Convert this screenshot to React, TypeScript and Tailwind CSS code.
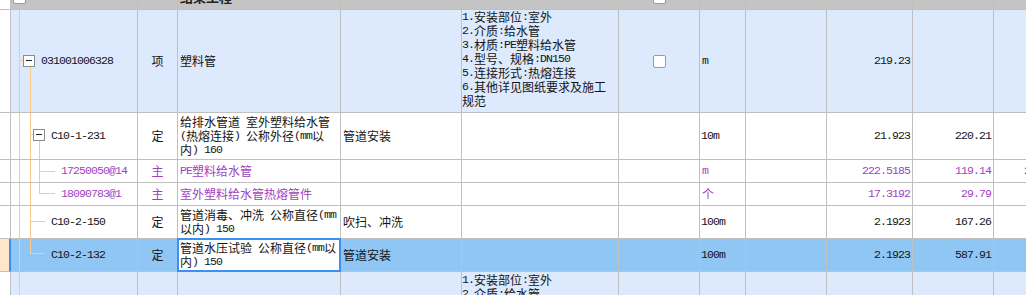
import React from "react";

const MONO = "font-['Liberation_Mono',monospace] text-[11.5px] tracking-[-0.9px]";
const GRID =
  "grid grid-cols-[11px_127px_40px_163px_121px_157px_81px_46px_81px_86px_81px_120px]";
const B = "border-r border-b border-[#c0c0c0] min-w-0";
const C = `${B} overflow-hidden flex items-center`;
const LINE = "absolute bg-[#fcc98b]";
const PURPLE = "text-[#a23fc0]";

function T({ s }: { s: string }) {
  const parts = s.split(/([\x20-\x7e]+)/).filter((p) => p !== "");
  return (
    <>
      {parts.map((p, i) =>
        /^[\x20-\x7e]+$/.test(p) ? (
          <span key={i} className={MONO}>
            {p}
          </span>
        ) : (
          <span key={i}>{p}</span>
        )
      )}
    </>
  );
}

function Lines({ lines }: { lines: string[] }) {
  return (
    <div className="whitespace-pre">
      {lines.map((l, i) => (
        <div key={i} className="h-[14px] leading-[14px] flex items-center">
          <T s={l} />
        </div>
      ))}
    </div>
  );
}

function MinusBox({ pos }: { pos: string }) {
  return (
    <div className={`absolute w-[12px] h-[12px] bg-white border border-[#8c8c8c] ${pos}`}>
      <div className="absolute left-[2px] top-[4px] w-[6px] h-px bg-[#222]" />
    </div>
  );
}

function CheckBox({ extra = "" }: { extra?: string }) {
  return (
    <div className={`w-[13px] h-[13px] shrink-0 bg-white border border-[#9a9a9a] rounded-[2px] ${extra}`} />
  );
}

const features = [
  "1.安装部位:室外",
  "2.介质:给水管",
  "3.材质:PE塑料给水管",
  "4.型号、规格:DN150",
  "5.连接形式:热熔连接",
  "6.其他详见图纸要求及施工",
  "规范",
];

export default function App() {
  return (
    <div className="w-[1026px] h-[295px] overflow-hidden bg-white font-['Noto_Sans_CJK_SC',sans-serif] text-[12px] leading-[14px] text-[#141414]">
      {/* header */}
      <div className={`${GRID} h-[10px] bg-[#c4c4c4]`}>
        <div className={`${B} overflow-hidden bg-white flex items-start`}>
          <span className={`${MONO} -mt-[10px] text-black`}>2</span>
        </div>
        <div className={`${B} overflow-hidden flex items-end`}>
          <CheckBox extra="mb-[5px] ml-[2px]" />
        </div>
        <div className={B} />
        <div className={`${B} overflow-hidden flex items-start pl-[2px]`}>
          <div className="-mt-[9px] leading-[12px] font-bold text-[13px] text-[#222]">结果工程</div>
        </div>
        <div className={B} />
        <div className={B} />
        <div className={`${B} overflow-hidden flex items-end justify-center`}>
          <CheckBox extra="mb-[5px]" />
        </div>
        <div className={B} />
        <div className={B} />
        <div className={B} />
        <div className={B} />
        <div className={B} />
      </div>

      {/* row 1 */}
      <div className={`${GRID} h-[103px] bg-[#dde9fc]`}>
        <div className={`${C} bg-white`} />
        <div className={`${C} relative pl-[30px]`}>
          <div className={`${LINE} left-[8px] top-0 -bottom-px w-px`} />
          <div className={`${LINE} left-[8px] top-[50px] w-[4px] h-px`} />
          <div className={`${LINE} left-[19px] top-[57px] -bottom-px w-px`} />
          <MinusBox pos="left-[12px] top-[45px]" />
          <T s="031001006328" />
        </div>
        <div className={`${C} justify-center`}>项</div>
        <div className={`${C} pl-[2px]`}>塑料管</div>
        <div className={C} />
        <div className={`${B} overflow-hidden flex items-start pl-0`}>
          <Lines lines={features} />
        </div>
        <div className={`${C} justify-center`}>
          <CheckBox />
        </div>
        <div className={`${C} pl-[2px]`}>
          <T s="m" />
        </div>
        <div className={C} />
        <div className={`${C} justify-end pr-[2px]`}>
          <T s="219.23" />
        </div>
        <div className={C} />
        <div className={C} />
      </div>

      {/* row 2 */}
      <div className={`${GRID} h-[47px] bg-white`}>
        <div className={`${C} bg-white`} />
        <div className={`${C} relative pl-[40px]`}>
          <div className={`${LINE} left-[8px] top-0 -bottom-px w-px`} />
          <div className={`${LINE} left-[19px] top-0 -bottom-px w-px`} />
          <div className={`${LINE} left-[19px] top-[21px] w-[3px] h-px`} />
          <div className={`${LINE} left-[28px] top-[28px] -bottom-px w-px`} />
          <MinusBox pos="left-[22px] top-[16px]" />
          <T s="C10-1-231" />
        </div>
        <div className={`${C} justify-center`}>定</div>
        <div className={`${C} pl-[2px]`}>
          <Lines lines={["给排水管道 室外塑料给水管", "(热熔连接) 公称外径(mm以", "内) 160"]} />
        </div>
        <div className={`${C} pl-[2px]`}>管道安装</div>
        <div className={C} />
        <div className={C} />
        <div className={`${C} pl-[1px]`}>
          <T s="10m" />
        </div>
        <div className={C} />
        <div className={`${C} justify-end pr-[2px]`}>
          <T s="21.923" />
        </div>
        <div className={`${C} justify-end pr-[2px]`}>
          <T s="220.21" />
        </div>
        <div className={C} />
      </div>

      {/* row 3 */}
      <div className={`${GRID} h-[23px] bg-white ${PURPLE}`}>
        <div className={`${C} bg-white`} />
        <div className={`${C} relative pl-[50px]`}>
          <div className={`${LINE} left-[8px] top-0 -bottom-px w-px`} />
          <div className={`${LINE} left-[19px] top-0 -bottom-px w-px`} />
          <div className={`${LINE} left-[28px] top-0 -bottom-px w-px`} />
          <div className={`${LINE} left-[28px] top-[11px] w-[16px] h-px`} />
          <T s="17250050@14" />
        </div>
        <div className={`${C} justify-center`}>主</div>
        <div className={`${C} pl-[2px]`}>
          <T s="PE塑料给水管" />
        </div>
        <div className={C} />
        <div className={C} />
        <div className={C} />
        <div className={`${C} pl-[2px]`}>
          <T s="m" />
        </div>
        <div className={C} />
        <div className={`${C} justify-end pr-[2px]`}>
          <T s="222.5185" />
        </div>
        <div className={`${C} justify-end pr-[2px]`}>
          <T s="119.14" />
        </div>
        <div className={`${C} pl-[30px]`}>
          <T s="26514.14" />
        </div>
      </div>

      {/* row 4 */}
      <div className={`${GRID} h-[23px] bg-white ${PURPLE}`}>
        <div className={`${C} bg-white`} />
        <div className={`${C} relative pl-[50px]`}>
          <div className={`${LINE} left-[8px] top-0 -bottom-px w-px`} />
          <div className={`${LINE} left-[19px] top-0 -bottom-px w-px`} />
          <div className={`${LINE} left-[28px] top-0 h-[11px] w-px`} />
          <div className={`${LINE} left-[28px] top-[10px] w-[16px] h-px`} />
          <T s="18090783@1" />
        </div>
        <div className={`${C} justify-center`}>主</div>
        <div className={`${C} pl-[2px]`}>室外塑料给水管热熔管件</div>
        <div className={C} />
        <div className={C} />
        <div className={C} />
        <div className={`${C} pl-[2px]`}>个</div>
        <div className={C} />
        <div className={`${C} justify-end pr-[2px]`}>
          <T s="17.3192" />
        </div>
        <div className={`${C} justify-end pr-[2px]`}>
          <T s="29.79" />
        </div>
        <div className={C} />
      </div>

      {/* row 5 */}
      <div className={`${GRID} h-[33px] bg-white`}>
        <div className={`${C} bg-white`} />
        <div className={`${C} relative pl-[40px]`}>
          <div className={`${LINE} left-[8px] top-0 -bottom-px w-px`} />
          <div className={`${LINE} left-[19px] top-0 -bottom-px w-px`} />
          <div className={`${LINE} left-[19px] top-[15px] w-[15px] h-px`} />
          <T s="C10-2-150" />
        </div>
        <div className={`${C} justify-center`}>定</div>
        <div className={`${C} pl-[2px]`}>
          <Lines lines={["管道消毒、冲洗 公称直径(mm", "以内) 150"]} />
        </div>
        <div className={`${C} pl-[2px]`}>吹扫、冲洗</div>
        <div className={C} />
        <div className={C} />
        <div className={`${C} pl-[1px]`}>
          <T s="100m" />
        </div>
        <div className={C} />
        <div className={`${C} justify-end pr-[2px]`}>
          <T s="2.1923" />
        </div>
        <div className={`${C} justify-end pr-[2px]`}>
          <T s="167.26" />
        </div>
        <div className={C} />
      </div>

      {/* row 6 (selected) */}
      <div className={`${GRID} h-[33px] bg-[#90c6f4]`}>
        <div className="border-b border-b-[#c0c0c0] border-r-2 border-r-[#3b8ff0] bg-[#fde6c9]" />
        <div className={`${C} relative pl-[40px]`}>
          <div className={`${LINE} left-[8px] top-0 -bottom-px w-px`} />
          <div className={`${LINE} left-[19px] top-0 h-[15px] w-px`} />
          <div className={`${LINE} left-[19px] top-[14px] w-[15px] h-px`} />
          <T s="C10-2-132" />
        </div>
        <div className={`${C} justify-center`}>定</div>
        <div className={`${B} relative flex items-center pl-[2px] bg-white`}>
          <div className="absolute -left-px -top-px -right-px -bottom-px border-2 border-[#3d8ff2]" />
          <Lines lines={["管道水压试验 公称直径(mm以", "内) 150"]} />
        </div>
        <div className={`${C} pl-[2px]`}>管道安装</div>
        <div className={C} />
        <div className={C} />
        <div className={`${C} pl-[1px]`}>
          <T s="100m" />
        </div>
        <div className={C} />
        <div className={`${C} justify-end pr-[2px]`}>
          <T s="2.1923" />
        </div>
        <div className={`${C} justify-end pr-[2px]`}>
          <T s="587.91" />
        </div>
        <div className={C} />
      </div>

      {/* row 7 */}
      <div className={`${GRID} h-[103px] bg-[#dde9fc]`}>
        <div className={`${C} bg-white`} />
        <div className={`${C} relative`}>
          <div className={`${LINE} left-[8px] top-0 -bottom-px w-px`} />
        </div>
        <div className={C} />
        <div className={C} />
        <div className={C} />
        <div className={`${B} overflow-hidden flex items-start pt-[1px]`}>
          <Lines lines={features} />
        </div>
        <div className={C} />
        <div className={C} />
        <div className={C} />
        <div className={C} />
        <div className={C} />
        <div className={C} />
      </div>
    </div>
  );
}
